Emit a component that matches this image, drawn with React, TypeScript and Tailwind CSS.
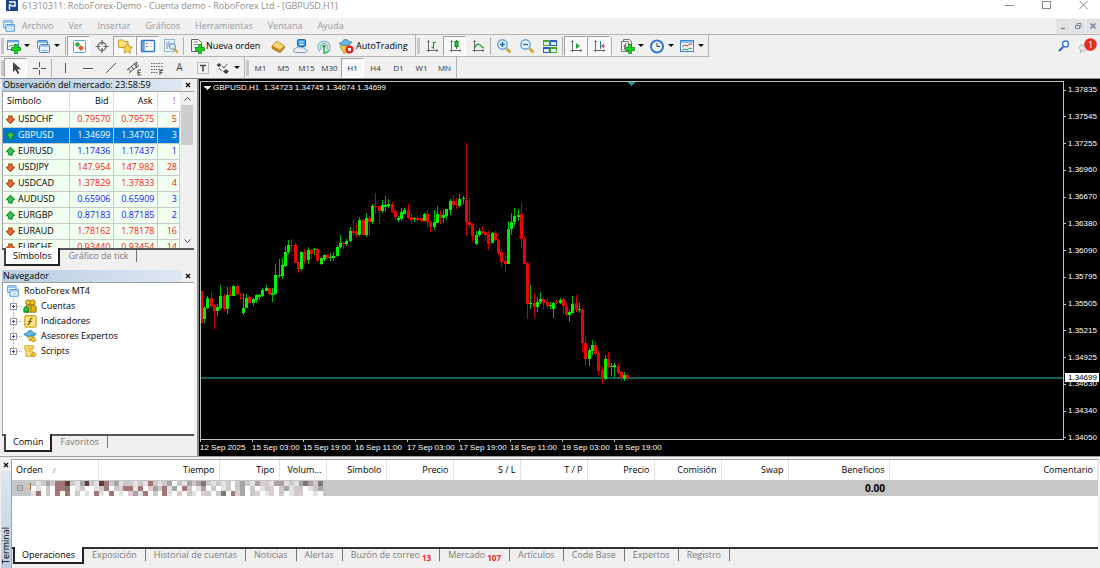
import React, { useState } from "react";

type Bar = [string, number, number, number, number];

// direction, high, low, body top, body bottom (three ticks per pixel)
const session1: Bar[] = [
  ["d", 333, 429, 333, 429], ["u", 378, 429, 384, 417], ["u", 348, 387, 354, 384], ["d", 336, 384, 354, 378],
  ["d", 372, 446, 375, 393], ["u", 372, 408, 381, 393], ["u", 315, 387, 348, 384], ["d", 342, 393, 348, 387],
  ["u", 321, 402, 345, 387], ["d", 321, 349, 343, 348], ["u", 315, 348, 318, 348], ["d", 315, 345, 318, 342],
  ["d", 340, 360, 342, 345], ["u", 339, 405, 384, 399], ["u", 342, 384, 354, 384], ["d", 348, 372, 351, 369],
  ["u", 354, 378, 357, 369], ["u", 342, 368, 345, 360], ["u", 342, 360, 345, 351], ["u", 324, 351, 330, 348],
  ["u", 315, 334, 324, 333], ["d", 323, 345, 324, 342], ["u", 324, 366, 340, 345], ["u", 252, 345, 285, 342],
  ["u", 237, 294, 285, 288], ["u", 234, 297, 255, 288], ["u", 198, 261, 216, 258], ["u", 180, 222, 195, 216],
  ["d", 178, 216, 195, 199], ["d", 189, 249, 195, 249], ["d", 246, 279, 246, 267], ["u", 213, 273, 216, 267],
  ["d", 207, 252, 216, 243], ["u", 201, 252, 210, 240], ["d", 207, 237, 210, 222], ["u", 204, 225, 207, 210],
  ["d", 204, 246, 207, 243], ["u", 231, 255, 234, 252], ["u", 225, 243, 225, 237], ["d", 222, 237, 225, 234],
  ["u", 219, 243, 231, 234], ["u", 216, 243, 228, 233], ["u", 195, 231, 201, 228], ["u", 165, 207, 189, 201],
  ["d", 186, 207, 189, 193], ["u", 177, 198, 183, 192], ["u", 141, 186, 153, 183], ["d", 117, 165, 153, 159],
  ["d", 129, 171, 156, 165], ["u", 111, 168, 120, 165], ["d", 117, 168, 120, 165], ["u", 98, 171, 114, 165],
  ["d", 108, 168, 114, 126], ["u", 72, 132, 78, 126], ["d", 39, 102, 77, 81],
];

const session2: Bar[] = [
  ["d", 228, 282, 228, 243], ["u", 210, 249, 225, 243], ["u", 198, 243, 225, 231], ["u", 207, 234, 221, 228],
  ["d", 216, 249, 222, 246], ["d", 237, 273, 243, 261], ["u", 258, 276, 264, 270], ["u", 234, 273, 246, 267],
  ["u", 234, 252, 240, 252], ["d", 222, 267, 240, 264], ["d", 252, 282, 261, 270], ["u", 261, 276, 265, 268],
  ["d", 258, 276, 264, 270], ["d", 263, 276, 264, 273], ["u", 249, 273, 252, 273], ["d", 240, 294, 252, 276],
  ["d", 273, 306, 276, 291], ["u", 240, 300, 276, 291], ["u", 228, 279, 252, 279], ["d", 240, 282, 252, 264],
  ["u", 240, 279, 255, 264], ["u", 237, 270, 237, 258], ["u", 207, 255, 213, 240], ["d", 195, 231, 213, 225],
  ["d", 204, 237, 222, 226], ["u", 192, 231, 207, 228], ["u", 198, 222, 203, 208], ["d", 39, 318, 210, 276],
  ["d", 204, 294, 276, 285], ["d", 279, 333, 282, 318], ["u", 303, 345, 315, 342], ["u", 294, 321, 303, 315],
  ["d", 288, 312, 303, 309], ["d", 303, 333, 306, 315], ["d", 303, 360, 312, 342], ["u", 306, 339, 309, 339],
  ["d", 303, 333, 309, 330], ["d", 327, 375, 330, 369], ["d", 357, 411, 366, 396], ["d", 372, 426, 393, 402],
  ["u", 273, 402, 297, 402], ["u", 249, 315, 276, 297], ["u", 234, 285, 258, 276], ["u", 237, 273, 255, 261],
  ["d", 216, 353, 252, 327], ["d", 321, 402, 327, 402],
];

const session3: Bar[] = [
  ["d", 216, 388, 219, 342], ["u", 285, 357, 339, 342], ["d", 309, 384, 339, 351], ["u", 321, 366, 336, 351],
  ["u", 306, 342, 327, 336], ["d", 321, 360, 327, 339], ["d", 324, 354, 336, 348], ["u", 336, 357, 345, 348],
  ["u", 336, 384, 339, 357], ["d", 330, 342, 336, 340], ["u", 324, 342, 330, 339], ["d", 324, 372, 327, 348],
  ["d", 339, 378, 348, 375], ["u", 360, 396, 366, 375], ["u", 318, 369, 342, 369], ["d", 315, 366, 339, 360],
  ["u", 336, 369, 357, 360], ["d", 354, 490, 360, 459], ["d", 438, 525, 459, 507], ["u", 474, 528, 480, 507],
  ["u", 450, 495, 465, 483], ["d", 453, 498, 465, 492], ["d", 483, 555, 489, 543], ["d", 528, 582, 540, 567],
  ["u", 495, 570, 507, 567], ["d", 486, 534, 507, 531], ["u", 519, 558, 528, 531], ["u", 519, 564, 525, 530],
  ["d", 519, 552, 528, 549], ["d", 543, 573, 546, 564], ["u", 546, 573, 555, 567], ["d", 549, 573, 555, 564],
];

const shift = (bars: Bar[], by: number) =>
  bars.map(([dir, ...levels]) => ({ up: dir === "u", levels: levels.map((v) => Math.round((v + by) / 3)) }));

const candles = [...shift(session1, 294), ...shift(session2, 144), ...shift(session3, 324)];

const prices = [
  "1.37835", "1.37545", "1.37255", "1.36960", "1.36670", "1.36380", "1.36090",
  "1.35795", "1.35505", "1.35215", "1.34925", "1.34630", "1.34340", "1.34050",
];

const times = [
  "12 Sep 2025", "15 Sep 03:00", "15 Sep 19:00", "16 Sep 11:00", "17 Sep 03:00",
  "17 Sep 19:00", "18 Sep 11:00", "19 Sep 03:00", "19 Sep 19:00",
];

const symbols = [
  { name: "USDCHF", bid: "0.79570", ask: "0.79575", spread: 5, up: false },
  { name: "GBPUSD", bid: "1.34699", ask: "1.34702", spread: 3, up: true },
  { name: "EURUSD", bid: "1.17436", ask: "1.17437", spread: 1, up: true },
  { name: "USDJPY", bid: "147.954", ask: "147.982", spread: 28, up: false },
  { name: "USDCAD", bid: "1.37829", ask: "1.37833", spread: 4, up: false },
  { name: "AUDUSD", bid: "0.65906", ask: "0.65909", spread: 3, up: true },
  { name: "EURGBP", bid: "0.87183", ask: "0.87185", spread: 2, up: true },
  { name: "EURAUD", bid: "1.78162", ask: "1.78178", spread: 16, up: false },
  { name: "EURCHF", bid: "0.93440", ask: "0.93454", spread: 14, up: false },
];

const menus = ["Archivo", "Ver", "Insertar", "Gráficos", "Herramientas", "Ventana", "Ayuda"];
const periods = ["M1", "M5", "M15", "M30", "H1", "H4", "D1", "W1", "MN"];

const columns = [
  { label: "Orden", width: "w-[86px]" },
  { label: "Tiempo", width: "w-[121px]" },
  { label: "Tipo", width: "w-[60px]" },
  { label: "Volum...", width: "w-[47px]" },
  { label: "Símbolo", width: "w-[60px]" },
  { label: "Precio", width: "w-[67px]" },
  { label: "S / L", width: "w-[67px]" },
  { label: "T / P", width: "w-[67px]" },
  { label: "Precio", width: "w-[67px]" },
  { label: "Comisión", width: "w-[67px]" },
  { label: "Swap", width: "w-[67px]" },
  { label: "Beneficios", width: "w-[101px]" },
  { label: "Comentario", width: "w-auto" },
];

const terminalTabs: { label: string; count?: number }[] = [
  { label: "Operaciones" },
  { label: "Exposición" },
  { label: "Historial de cuentas" },
  { label: "Noticias" },
  { label: "Alertas" },
  { label: "Buzón de correo", count: 13 },
  { label: "Mercado", count: 107 },
  { label: "Artículos" },
  { label: "Code Base" },
  { label: "Expertos" },
  { label: "Registro" },
];

// hidden order details, one letter per tile
const mosaic = [
  "glgmgrrkglmkglkrgmlgglglrglgmwglmgmdglglgwgmglmpglmmlglmdmgd",
  "wlwgwrrdwlgwwlgrwgprrlrwpmgrlmwrgwlmwgwlgwgmwgwlgpwgmlggwlgm",
  "lrwgwrwrwgwlwrlwrwlwpmlrwgwrlwpwglwpgwgdwrpmwgpwlpwgwlgpwwlw",
];
const tileColors: Record<string, string> = {
  w: "#ffffff", l: "#e3e1e1", g: "#cbc9c9", m: "#a8a4a4", d: "#7c7676", r: "#a17676", k: "#5f3a3a", p: "#e0cccc",
};

const Caret = () => (
  <svg className="h-[3px] w-[6px] shrink-0" viewBox="0 0 6 3">
    <path d="M0 0h6L3 3z" fill="#111" />
  </svg>
);

const Svg: React.FC<{ children: React.ReactNode; size?: string }> = ({ children, size = "h-4 w-4" }) => (
  <svg className={`${size} shrink-0`} viewBox="0 0 16 16" fill="none">
    {children}
  </svg>
);

const Plus = () => (
  <path d="M9.500 6.500h3v3h3v3h-3v3h-3v-3h-3v-3h3z" fill="#1fd321" stroke="#0a8a12" strokeWidth=".8" />
);

const Axes = () => (
  <path d="M4.500 3v11M2.500 12.500h11M3.500 4l1-1.500 1 1.500M12.500 11.500l1.500 1-1.500 1" stroke="#666" />
);

const Diamond = () => <path d="M12 9l3 3-3 3-3-3z" fill="#f2c330" stroke="#9c7411" strokeWidth=".8" />;

const icons: Record<string, React.ReactNode> = {
  newChart: (
    <>
      <rect x="2.500" y="2.500" width="11" height="9" fill="#fff" stroke="#3f83c8" />
      <path d="M2 3.500h12" stroke="#79b0e2" strokeWidth="2" />
      <path d="M4 9l2-2 2 1 3-2" stroke="#3a9c4a" />
      <Plus />
    </>
  ),
  profiles: (
    <>
      <rect x="2.500" y="2.500" width="10" height="8" rx="1" fill="#fff" stroke="#3f83c8" />
      <path d="M3 4h9" stroke="#79b0e2" strokeWidth="2" />
      <rect x="4.500" y="6.500" width="10" height="8" rx="1" fill="#e4f0fb" stroke="#3f83c8" />
      <path d="M5 8h9" stroke="#9cc6ea" strokeWidth="2" />
      <path d="M6.500 12.500h6" stroke="#79b0e2" />
    </>
  ),
  market: (
    <>
      <rect x="2.500" y="2.500" width="12" height="12" rx="1" fill="#fff" stroke="#5aa0da" />
      <path d="M6.500 4l2.500 2.500L6.500 9 4 6.500z" fill="#2fb940" stroke="#12852a" strokeWidth=".6" />
      <path d="M10 7.500l2.500 2.500-2.500 2.500L7.500 10z" fill="#f05a28" stroke="#b43310" strokeWidth=".6" />
    </>
  ),
  crosshair: (
    <>
      <circle cx="8" cy="8.500" r="4" stroke="#666" strokeWidth="1.300" />
      <path d="M8 2v5M8 10v5M1.500 8.500h5M9.500 8.500h5" stroke="#666" strokeWidth="1.200" />
    </>
  ),
  favorites: (
    <>
      <path d="M1 4l1-2h4l1 1.500h4v6H2z" fill="#ffe27a" stroke="#c9961b" />
      <path d="M10.500 5.500l1.500 3.300 3.500.4-2.600 2.400.7 3.500-3.100-1.800-3.100 1.800.7-3.500-2.600-2.400 3.500-.4z" fill="#ffd94d" stroke="#b98512" strokeWidth=".8" />
    </>
  ),
  navigator: (
    <>
      <rect x="1.500" y="2.500" width="13" height="11" rx="1" fill="#fff" stroke="#2f78c4" strokeWidth="1.400" />
      <path d="M3.500 3v10" stroke="#5a9bdc" strokeWidth="2.500" />
      <path d="M6 5.500h1.500M6 8.500h1.500" stroke="#b8342c" />
      <path d="M8.500 5.500h4M8.500 8.500h4" stroke="#cfdbe8" />
    </>
  ),
  tester: (
    <>
      <rect x="1.500" y="1.500" width="10" height="12" fill="#eef6fd" stroke="#9ab6cf" />
      <path d="M4 4v7M6 3v6M8 5v6" stroke="#6d8faf" />
      <circle cx="9.500" cy="8.500" r="3" fill="#d6ecfb" stroke="#4e86b8" />
      <path d="M11.500 11l3 3.500" stroke="#caa02c" strokeWidth="2" />
    </>
  ),
  order: (
    <>
      <path d="M2.500 1.500h7l3 3v9h-10z" fill="#fff" stroke="#666" />
      <path d="M4.500 4h5M4.500 6.500h5M4.500 9h3" stroke="#888" />
      <Plus />
    </>
  ),
  editor: (
    <>
      <path d="M7 3l7.500 5-4.500 4.500L2 8z" fill="#f7d470" stroke="#b67d17" strokeWidth=".8" />
      <path d="M2 8v2.500l8 4.500 4.500-5V8L10 12.500z" fill="#c98a1d" stroke="#a86f12" strokeWidth=".6" />
    </>
  ),
  vps: (
    <>
      <rect x="4.500" y="1.500" width="8" height="7" rx="1" fill="#3a9cf0" stroke="#1767b3" />
      <path d="M6.500 4h4M6.500 6.500h4" stroke="#fff" />
      <path d="M2.500 14.500a2 2 0 010-4c1-2 4-2 5-.5 2-1 4 0 4.500 1 3 0 3 3.500.5 3.500z" fill="#e9eef5" stroke="#8a99ad" />
    </>
  ),
  signals: (
    <>
      <path d="M4 13.500a6 6 0 118.500-.5M5.500 11.500a3.500 3.500 0 115 0" stroke="#7fb4c6" strokeWidth="1.200" />
      <circle cx="8" cy="8.500" r="1.800" fill="#2fa84a" />
      <path d="M8 9v6c2 0 4-1 5-3" stroke="#4dbb62" strokeWidth="1.800" />
    </>
  ),
  auto: (
    <>
      <path d="M2 8l9-1 2 5-7 3.500z" fill="#f5cb45" stroke="#b08314" strokeWidth=".8" />
      <path d="M1 5.500c2 2.500 11 2.500 13-1C13 3 11 4 10.500 3 9.500 1 5 1 4.500 3.500 4 4.500 2 4.500 1 5.500z" fill="#6bb8e8" stroke="#2d7cb2" strokeWidth=".8" />
      <circle cx="11.500" cy="11.500" r="4" fill="#e3261c" />
      <rect x="10" y="10" width="3" height="3" fill="#fff" />
    </>
  ),
  bars: (
    <>
      <Axes />
      <path d="M9.500 4v7M9.500 4.500H12M7.500 9.500h2" stroke="#1b9c2f" strokeWidth="1.200" />
    </>
  ),
  candles: (
    <>
      <Axes />
      <path d="M9.500 2v9" stroke="#0a7d1c" />
      <rect x="8" y="3.500" width="3" height="5" fill="#2fc644" stroke="#0a7d1c" />
    </>
  ),
  line: (
    <>
      <Axes />
      <path d="M4.500 10c2-4 4-4.500 5-3.500S12 9.500 14 10" stroke="#1b9c2f" strokeWidth="1.200" />
    </>
  ),
  zoomIn: (
    <>
      <path d="M10.500 10.500l4 4" stroke="#d3a52b" strokeWidth="3" />
      <circle cx="6.500" cy="6.500" r="4.700" fill="#e6f4fd" stroke="#5aa3da" strokeWidth="1.400" />
      <path d="M6.500 4v5M4 6.500h5" stroke="#1f6cae" strokeWidth="1.400" />
    </>
  ),
  zoomOut: (
    <>
      <path d="M10.500 10.500l4 4" stroke="#d3a52b" strokeWidth="3" />
      <circle cx="6.500" cy="6.500" r="4.700" fill="#e6f4fd" stroke="#5aa3da" strokeWidth="1.400" />
      <path d="M4 6.500h5" stroke="#1f6cae" strokeWidth="1.400" />
    </>
  ),
  tile: (
    <>
      <rect x="1" y="2" width="7" height="6" fill="#4ba62b" />
      <rect x="8" y="2" width="7" height="6" fill="#2a5fc0" />
      <rect x="1" y="9" width="7" height="6" fill="#2a5fc0" />
      <rect x="8" y="9" width="7" height="6" fill="#4ba62b" />
      <path d="M2 4h5v3H2zM9 4h5v3H9zM2 11h5v3H2zM9 11h5v3H9z" fill="#dfeaf0" />
    </>
  ),
  scroll: (
    <>
      <Axes />
      <path d="M8 5l4 3-4 3z" fill="#23a638" />
    </>
  ),
  shiftEnd: (
    <>
      <Axes />
      <path d="M9.500 3v8" stroke="#2e6f9e" />
      <path d="M14 8h-3M13 6l-2.500 2 2.500 2" stroke="#c33c1d" />
    </>
  ),
  indicators: (
    <>
      <path d="M4.500 1.500h6l2 2v8h-8z" fill="#eee" stroke="#777" />
      <path d="M2.500 3.500h7v10h-7z" fill="#fff" stroke="#777" />
      <path d="M7.500 5.500c-2-.5-1.500 2-1.500 3.500S5.500 12 4.500 11.500M4.500 8h3" stroke="#444" />
      <Plus />
    </>
  ),
  clock: (
    <>
      <circle cx="8" cy="8.500" r="6" fill="#eef6ff" stroke="#2f78d0" strokeWidth="2" />
      <path d="M8 5v3.500h3" stroke="#333" />
    </>
  ),
  template: (
    <>
      <rect x="1.500" y="2.500" width="13" height="11" fill="#f4f9fe" stroke="#3f83c8" />
      <path d="M2 4h12" stroke="#8cbde8" strokeWidth="2" />
      <path d="M3 8.500l3-1.500 2 1 3-2h2" stroke="#b6402b" />
      <path d="M3 12l3-1 2 1 3-2 2 1" stroke="#2a9440" />
    </>
  ),
  cursor: <path d="M5 2v10l2.500-2.200L9.500 14l1.800-.8L9.500 9.200H13z" fill="#444" />,
  cross: <path d="M8.500 2v5M8.500 10v5M2 8.500h5M10 8.500h5" stroke="#555" />,
  vline: <path d="M8.500 3v10" stroke="#555" />,
  hline: <path d="M3 8.500h10" stroke="#555" />,
  trend: <path d="M3 13L13 3" stroke="#555" />,
  channel: (
    <>
      <path d="M1 10L11 2M3 13L13 5M2 8l3 4M5 6l3 4M8 3l3 5M11 2l-1 4" stroke="#555" />
      <path d="M15 10h-3v5h3M12 12.500h2.500" stroke="#444" />
    </>
  ),
  fibo: (
    <>
      <path d="M2 3.500h12M2 6.500h12M2 9.500h12M2 12.500h7" stroke="#666" strokeDasharray="1.500 1" />
      <path d="M14 10.500h-3V15M11 12.500h2.500" stroke="#444" />
    </>
  ),
  label: (
    <>
      <rect x="2.500" y="2.500" width="11" height="11" stroke="#888" strokeDasharray="1 1" />
      <path d="M5 5.500h6M8 5.500v6" stroke="#444" strokeWidth="1.500" />
    </>
  ),
  arrows: (
    <>
      <path d="M4 3l2.500 2L4 7 1.500 5zM11 9l3 2.500-3 2.500-3-2.500z" fill="#444" />
      <path d="M4 8l2.500 3M7 6l2 2 3-4" stroke="#555" />
    </>
  ),
};

const Tool: React.FC<{ icon: string; label: string; pressed?: boolean }> = ({ icon, label, pressed }) => (
  <button
    aria-label={label}
    className={
      pressed
        ? "flex h-5 w-[23px] items-center justify-center border border-t-[#a0a0a0] border-l-[#a0a0a0] border-r-white border-b-white bg-[#f8f8f8]"
        : "flex h-5 w-[23px] items-center justify-center"
    }
  >
    <Svg>{icons[icon]}</Svg>
  </button>
);

const DropTool: React.FC<{ icon: string; label: string }> = ({ icon, label }) => (
  <button aria-label={label} className="flex h-5 w-[30px] items-center gap-[3px] pl-px">
    <Svg>{icons[icon]}</Svg>
    <Caret />
  </button>
);

const Separator = () => <div className="mx-px h-[18px] w-px bg-[#b0b0b0]" />;
const Handle = () => <div className="ml-px h-4 w-[3px] bg-[#c8c8c8]" />;

const CloseMark = () => (
  <svg className="h-[6px] w-[6px]" viewBox="0 0 6 6">
    <path d="M1 1l4 4M5 1L1 5" stroke="#111" strokeWidth="1.400" />
  </svg>
);

const PanelTitle: React.FC<{ text: string }> = ({ text }) => (
  <div className="flex h-3 items-center justify-between">
    <h2 className="flex-1 bg-linear-to-r from-[#b9cce0] to-[#dfe8f1] pl-px leading-3">{text}</h2>
    <button aria-label="Cerrar" className="flex h-3 w-3 items-center justify-center">
      <CloseMark />
    </button>
  </div>
);

const PanelTabs: React.FC<{ tabs: string[] }> = ({ tabs }) => {
  const [active, setActive] = useState(0);

  return (
    <div className="flex h-[18px] border-t-2 border-[#555] bg-[#f0f0f0] pl-[2px] leading-3">
      {tabs.map((tab, i) => (
        <button
          key={tab}
          onClick={() => setActive(i)}
          className={
            i === active
              ? "-mt-[2px] h-[18px] border-x-2 border-b-2 border-[#222] border-l-[#444] bg-white px-[7px] text-black"
              : "h-3 border-r border-[#777] px-2 text-[#7a7a7a]"
          }
        >
          {tab}
        </button>
      ))}
    </div>
  );
};

const Arrow: React.FC<{ up: boolean }> = ({ up }) => (
  <svg className="h-[9px] w-[9px] shrink-0" viewBox="0 0 8 8">
    {up ? (
      <path d="M4 .5L7.500 4 5.500 5v2h-3V5L.5 4z" fill="#3fc552" stroke="#14832a" strokeWidth=".9" />
    ) : (
      <path d="M4 7.500L.5 4l2-1V1h3v2l2 1z" fill="#f0703c" stroke="#b03a14" strokeWidth=".9" />
    )}
  </svg>
);

const MarketWatch = () => {
  const [selected, setSelected] = useState("GBPUSD");

  return (
    <section className="flex flex-col">
      <PanelTitle text="Observación del mercado: 23:58:59" />
      <div className="flex h-[157px] overflow-hidden border-t border-l border-[#a0a0a0] bg-white">
        <div className="min-w-0 flex-1">
          <table className="w-full table-fixed border-collapse leading-3">
            <thead>
              <tr className="h-[19px]">
                <th className="w-[66px] border-r border-[#dcdcdc] pl-1 text-left font-normal">Símbolo</th>
                <th className="w-11 border-r border-[#dcdcdc] pr-1 text-right font-normal">Bid</th>
                <th className="w-11 border-r border-[#dcdcdc] pr-1 text-right font-normal">Ask</th>
                <th className="pr-1 text-right font-normal text-[#b06060]">!</th>
              </tr>
            </thead>
            <tbody>
              {symbols.map((s) => {
                const isSelected = s.name === selected;
                const tone = isSelected ? "text-white" : s.up ? "text-[#1414ff]" : "text-[#ff1414]";
                const cell = `border border-[#c6cdc6] pr-[2px] text-right ${tone}`;

                return (
                  <tr
                    key={s.name}
                    onClick={() => setSelected(s.name)}
                    className={isSelected ? "h-4 bg-[#0078d7] text-white" : "h-4 bg-[#f0fff0]"}
                  >
                    <td className="border-y border-r border-[#c6cdc6] pl-[3px]">
                      <span className="flex items-center gap-[3px]">
                        <Arrow up={s.up} />
                        {s.name}
                      </span>
                    </td>
                    <td className={cell}>{s.bid}</td>
                    <td className={cell}>{s.ask}</td>
                    <td className={cell}>{s.spread}</td>
                  </tr>
                );
              })}
            </tbody>
          </table>
        </div>
        <div className="flex w-[14px] flex-col items-center justify-between bg-[#f0f0f0] py-[5px]">
          <svg className="h-1 w-[7px]" viewBox="0 0 7 4">
            <path d="M.5 3.500l3-3 3 3" fill="none" stroke="#444" />
          </svg>
          <div className="mt-1 mb-auto h-10 w-3 bg-[#cdcdcd]" />
          <svg className="h-1 w-[7px]" viewBox="0 0 7 4">
            <path d="M.5.5l3 3 3-3" fill="none" stroke="#444" />
          </svg>
        </div>
      </div>
      <PanelTabs tabs={["Símbolos", "Gráfico de tick"]} />
    </section>
  );
};

const PlatformIcon = () => (
  <Svg size="h-3 w-3">
    <rect x="1" y="1" width="11" height="9" rx="1" fill="#fff" stroke="#4a98dc" strokeWidth="1.500" />
    <path d="M1 3h11" stroke="#8cc0ec" strokeWidth="2" />
    <rect x="4" y="6" width="11" height="9" rx="1" fill="#fff" stroke="#4a98dc" strokeWidth="1.500" />
    <path d="M4 8h11" stroke="#8cc0ec" strokeWidth="2" />
    <path d="M6 13l2-2 1.500 2 1.500-2 2 2" stroke="#6fb0e6" />
  </Svg>
);

const treeItems = [
  {
    label: "Cuentas",
    icon: (
      <>
        <circle cx="6" cy="4" r="3" fill="#f0c52c" stroke="#8a6a0c" />
        <circle cx="11" cy="4" r="3" fill="#f0c52c" stroke="#8a6a0c" />
        <path d="M3 15V9c0-2 5-3 6-1 1-2 6-1 6 1v6z" fill="#e0b01c" stroke="#8a6a0c" />
        <path d="M9 8v6" stroke="#8a6a0c" />
        <path d="M1 10l2-1.500L6 10v5H1z" fill="#27c43a" stroke="#0d8520" />
      </>
    ),
  },
  {
    label: "Indicadores",
    icon: (
      <>
        <rect x="2" y="2" width="13" height="13" rx="2" fill="#ffe684" stroke="#d1a52c" strokeWidth="1.500" />
        <path d="M11 5c-3-1-2.500 2-3 4s-1 3.500-3 3M6 8.500h4" stroke="#5b4a14" strokeWidth="1.200" />
      </>
    ),
  },
  {
    label: "Asesores Expertos",
    icon: (
      <>
        <path d="M4 7l8 0 1 4-5 3z" fill="#f5cb45" stroke="#b08314" strokeWidth=".8" />
        <path d="M1 6c2 3 12 3 14-.5-1-1-3-.5-4-2C10 1 6 1 5 4c-1 1-3 1-4 2z" fill="#5cb3ea" stroke="#2d7cb2" />
        <Diamond />
      </>
    ),
  },
  {
    label: "Scripts",
    icon: (
      <>
        <path d="M2 2h10v3h-2l1 7 2 2H3l1-2-1-6H2z" fill="#ffe27a" stroke="#c9961b" />
        <path d="M5 5h4M5 8h4" stroke="#c9961b" />
        <Diamond />
      </>
    ),
  },
];

const Navigator = () => (
  <section className="flex min-h-0 flex-1 flex-col">
    <PanelTitle text="Navegador" />
    <div className="flex-1 border-t border-l border-[#a0a0a0] bg-white pl-1 leading-[15px]">
      <div className="flex h-[15px] items-center gap-[5px]">
        <PlatformIcon />
        RoboForex MT4
      </div>
      <ul>
        {treeItems.map((item, i) => (
          <li key={item.label} className="flex h-[15px] items-center">
            <svg className="h-[15px] w-4" viewBox="0 0 16 15" fill="none">
              <path
                d={i === treeItems.length - 1 ? "M6.500 0v8M10 8.500h6" : "M6.500 0v15M10 8.500h6"}
                stroke="#aaa"
                strokeDasharray="1 1"
              />
              <rect x="3.500" y="5.500" width="6" height="6" fill="#fff" stroke="#999" />
              <path d="M5 8.500h3M6.500 7v3" stroke="#2a4a9a" />
            </svg>
            <Svg size="h-[14px] w-[14px]">{item.icon}</Svg>
            <span className="ml-1">{item.label}</span>
          </li>
        ))}
      </ul>
    </div>
    <PanelTabs tabs={["Común", "Favoritos"]} />
  </section>
);

const Chart = () => (
  <section className="flex min-w-0 flex-1 flex-col border-l-2 border-[#8c8c8c] bg-black pt-[2px] pl-px font-['Liberation_Sans',Arial,sans-serif] text-[8px] leading-3 text-white">
    <div className="flex min-h-0 flex-1">
      <div className="relative min-w-0 flex-1 border border-[#c0c0c0]">
        <svg className="block h-full w-full" shapeRendering="crispEdges">
          <rect x="0" y="295" width="100%" height="2" fill="#0f5f5b" />
          {candles.map(({ up, levels: [high, low, top, bottom] }, i) => {
            const x = Math.round(i * 3.23);

            return (
              <g key={i}>
                <rect x={x} y={high} width="1" height={low - high} fill={up ? "#00b800" : "#c80000"} />
                <rect
                  x={x - 1}
                  y={top}
                  width="3"
                  height={Math.max(1, bottom - top)}
                  fill={up ? "#00f000" : "#f00000"}
                />
              </g>
            );
          })}
          <path d="M426 0h8l-4 4z" fill="#1f9a94" />
          <path d="M3 4h7l-3.500 4z" fill="#fff" />
        </svg>
        <p className="absolute top-0 left-3 whitespace-pre">GBPUSD,H1  1.34723 1.34745 1.34674 1.34699</p>
      </div>
      <div className="relative flex w-9 flex-col">
        <ul className="-mb-1 flex flex-1 flex-col justify-between pt-[3px]">
          {prices.map((p) => (
            <li key={p} className="flex h-3 items-center gap-[2px]">
              <span className="h-px w-[2px] bg-[#c0c0c0]" />
              {p}
            </li>
          ))}
        </ul>
        <span className="absolute top-[292px] left-px flex h-[9px] w-[34px] items-center bg-white pl-[3px] text-black">
          1.34699
        </span>
      </div>
    </div>
    <svg className="h-4 w-full" fill="#fff">
      {times.map((t, i) => (
        <g key={t}>
          <rect x={Math.round(i * 51.7)} y="0" width="1" height="2" fill="#c0c0c0" />
          <text x={Math.round(i * 51.7)} y="10">
            {t}
          </text>
        </g>
      ))}
    </svg>
  </section>
);

const Terminal = () => {
  const [tab, setTab] = useState("Operaciones");

  return (
    <section className="flex h-[112px] border-t border-[#a0a0a0] bg-[#f0f0f0] pt-[2px] leading-3">
      <div className="flex w-[11px] flex-col items-center">
        <button aria-label="Cerrar" className="flex h-3 w-[9px] items-center justify-center">
          <CloseMark />
        </button>
        <h2 className="w-[10px] flex-1 rotate-180 bg-linear-to-b from-[#b9cce0] to-[#dfe8f1] pt-1 leading-[10px] [writing-mode:vertical-rl]">
          Terminal
        </h2>
      </div>
      <div className="mr-[2px] flex min-w-0 flex-1 flex-col border-t border-l border-[#a0a0a0] bg-white">
        <table className="w-full table-fixed border-collapse">
          <thead>
            <tr className="h-[20px]">
              {columns.map((c, i) => (
                <th
                  key={i}
                  className={`${c.width} border-r border-[#e2e2e2] px-1 font-normal ${i === 0 ? "text-left" : "text-right"}`}
                >
                  {c.label}
                  {i === 0 && <span className="ml-[10px] text-[8px] text-[#777]">/</span>}
                </th>
              ))}
            </tr>
          </thead>
          <tbody>
            <tr className="h-4 bg-[#c6c6c6]">
              <td colSpan={11}>
                <div className="flex items-center gap-[5px] pl-1">
                  <svg className="h-2 w-2" viewBox="0 0 8 8" fill="none">
                    <circle cx="4" cy="4" r="3" stroke="#888" />
                    <path d="M3 4h2" stroke="#888" />
                  </svg>
                  <svg className="h-[15px] w-[294px]" viewBox="0 0 294 15" shapeRendering="crispEdges">
                    <rect x="1" y="2" width="1" height="7" fill="#a0622c" />
                    {mosaic.map((row, y) =>
                      row.split("").map((c, x) => (
                        <rect key={`${x}-${y}`} x={2 + x * 4.866} y={y * 5} width="5" height="5" fill={tileColors[c]} />
                      ))
                    )}
                  </svg>
                </div>
              </td>
              <td className="pr-1 text-right text-[10px] font-bold">0.00</td>
              <td />
            </tr>
          </tbody>
        </table>
        <div className="mt-auto flex h-[21px] border-t-2 border-[#333] bg-[#f0f0f0]">
          {terminalTabs.map((t) => (
            <button
              key={t.label}
              onClick={() => setTab(t.label)}
              className={
                t.label === tab
                  ? "-mt-[2px] ml-px h-[17px] border-x-2 border-b-2 border-[#222] bg-white px-[7px]"
                  : "flex h-3 items-start border-r border-[#777] px-2 text-[#7a7a7a]"
              }
            >
              {t.label}
              {t.count && <span className="ml-[2px] pt-[3px] text-[8px] leading-3 font-bold text-[#ff2020]">{t.count}</span>}
            </button>
          ))}
        </div>
      </div>
    </section>
  );
};

export default function App() {
  const [period, setPeriod] = useState("H1");

  return (
    <div className="flex h-screen flex-col overflow-hidden bg-[#f0f0f0] font-['Open_Sans','Noto_Sans',sans-serif] text-[9px] text-black">
      <header className="flex h-[18px] items-start justify-between bg-white">
        <div className="flex items-start gap-1 pl-[6px]">
          <svg className="h-[11px] w-3" viewBox="0 1 12 11" fill="none">
            <rect width="12" height="12" fill="#17448a" />
            <path d="M3 3h6v4H5.500M3.500 10.500V6h2" stroke="#fff" strokeWidth="1.500" />
          </svg>
          <h1 className="leading-[11px] text-[#8c8c8c]">61310311: RoboForex-Demo - Cuenta demo - RoboForex Ltd - [GBPUSD,H1]</h1>
        </div>
        <div className="flex gap-7 pr-3">
          <button aria-label="Minimizar">
            <svg className="h-[10px] w-[9px]" viewBox="0 0 9 10"><path d="M0 5.500h9" stroke="#888" /></svg>
          </button>
          <button aria-label="Maximizar">
            <svg className="h-[10px] w-[9px]" viewBox="0 0 9 10"><rect x=".5" y="1.500" width="8" height="7" fill="none" stroke="#888" /></svg>
          </button>
          <button aria-label="Cerrar ventana">
            <svg className="h-[10px] w-[9px]" viewBox="0 0 9 10"><path d="M.5 1l8 8M8.500 1l-8 8" stroke="#888" /></svg>
          </button>
        </div>
      </header>

      <nav className="flex h-[17px] items-center justify-between border-b border-[#b4b4b4] text-[#9a9a9a]">
        <div className="flex items-center gap-[15px] pl-[3px]">
          <PlatformIcon />
          {menus.map((m, i) => (
            <button key={m} className={i === 0 ? "-ml-2 leading-3" : "leading-3"}>
              {m}
            </button>
          ))}
        </div>
        <div className="flex gap-px">
          <button aria-label="Minimizar gráfico" className="flex h-[14px] w-[14px] items-center justify-center bg-[#e2e2e2]">
            <svg className="h-2 w-2" viewBox="0 0 8 8"><path d="M2 6.500h4" stroke="#7388a0" strokeWidth="1.500" /></svg>
          </button>
          <button aria-label="Restaurar gráfico" className="flex h-[14px] w-[14px] items-center justify-center bg-[#e2e2e2]">
            <svg className="h-2 w-2" viewBox="0 0 8 8" fill="none"><path d="M3 3V1.500h4V5H5.500M1.500 3.500h4v3h-4z" stroke="#7388a0" /></svg>
          </button>
          <button aria-label="Cerrar gráfico" className="flex h-[14px] w-[14px] items-center justify-center bg-[#e2e2e2]">
            <svg className="h-2 w-2" viewBox="0 0 8 8"><path d="M1.500 1.500l5 5M6.500 1.500l-5 5" stroke="#7388a0" strokeWidth="1.600" /></svg>
          </button>
        </div>
      </nav>

      <div className="flex h-[22px] justify-between">
        <div className="flex h-[22px] items-center border-r border-b border-[#b4b4b4]">
          <Handle />
          <DropTool icon="newChart" label="Nuevo gráfico" />
          <DropTool icon="profiles" label="Perfiles" />
          <Separator />
          <Tool icon="market" label="Observación del mercado" pressed />
          <Tool icon="crosshair" label="Ventana de datos" />
          <Tool icon="favorites" label="Navegador" pressed />
          <Tool icon="navigator" label="Terminal" pressed />
          <Tool icon="tester" label="Probador de estrategias" />
          <Separator />
          <button className="flex w-[81px] items-center gap-px pl-1 whitespace-nowrap">
            <Svg>{icons.order}</Svg>
            Nueva orden
          </button>
          <Tool icon="editor" label="MetaEditor" />
          <Tool icon="vps" label="Servidor virtual" />
          <Tool icon="signals" label="Señales" />
          <button className="flex w-[80px] items-center gap-[2px] pl-[3px] whitespace-nowrap">
            <Svg>{icons.auto}</Svg>
            AutoTrading
          </button>
          <div className="h-full w-px bg-[#b4b4b4]" />
          <Handle />
          <Tool icon="bars" label="Gráfico de barras" />
          <Tool icon="candles" label="Velas japonesas" pressed />
          <Tool icon="line" label="Gráfico de líneas" />
          <Separator />
          <Tool icon="zoomIn" label="Aumentar" />
          <Tool icon="zoomOut" label="Disminuir" />
          <Tool icon="tile" label="Mosaico" />
          <Separator />
          <Tool icon="scroll" label="Desplazamiento automático" pressed />
          <Tool icon="shiftEnd" label="Desplazar fin del gráfico" pressed />
          <Separator />
          <div className="flex pl-[5px]">
            <DropTool icon="indicators" label="Indicadores" />
            <DropTool icon="clock" label="Períodos" />
            <DropTool icon="template" label="Plantillas" />
          </div>
        </div>
        <div className="flex items-center gap-2 pr-[3px]">
          <button aria-label="Buscar">
            <svg className="h-3 w-3" viewBox="0 0 12 12" fill="none">
              <path d="M5 7l-4 4" stroke="#2a62c8" strokeWidth="2" />
              <circle cx="7.500" cy="4" r="3" fill="#fff" stroke="#3a74dc" strokeWidth="1.400" />
            </svg>
          </button>
          <button aria-label="Mensajes" className="flex">
            <svg className="h-4 w-[19px]" viewBox="0 0 19 16">
              <path d="M2 15l1-3c-3-1-2-5 2-5s6 4 3 5c-1 1-3 1-4 1z" fill="#e6e6ea" stroke="#b2b2ba" />
              <circle cx="12.500" cy="6.500" r="6.300" fill="#df301b" />
              <text x="10" y="10" fill="#fff" fontSize="9">1</text>
            </svg>
          </button>
        </div>
      </div>

      <div className="flex h-[21px]">
        <div className="flex items-center border-r border-[#b4b4b4]">
          <Handle />
          <Tool icon="cursor" label="Cursor" pressed />
          <Tool icon="cross" label="Retículo" />
          <Separator />
          <Tool icon="vline" label="Línea vertical" />
          <Tool icon="hline" label="Línea horizontal" />
          <Tool icon="trend" label="Línea de tendencia" />
          <Tool icon="channel" label="Canal equidistante" />
          <Tool icon="fibo" label="Retroceso de Fibonacci" />
          <button className="h-5 w-[23px] text-center text-[10px] font-medium text-[#444]">A</button>
          <Tool icon="label" label="Etiqueta de texto" />
          <DropTool icon="arrows" label="Flechas" />
          <div className="h-full w-px bg-[#b4b4b4]" />
          <Handle />
          {periods.map((p) => (
            <button
              key={p}
              onClick={() => setPeriod(p)}
              className={
                p === period
                  ? "h-5 w-[23px] border border-t-[#a0a0a0] border-l-[#a0a0a0] border-r-white border-b-white bg-[#f8f8f8] text-[8px] text-[#333]"
                  : "h-5 w-[23px] text-[8px] text-[#333]"
              }
            >
              {p}
            </button>
          ))}
        </div>
      </div>

      <main className="flex min-h-0 flex-1 border-t border-[#8c8c8c]">
        <aside className="flex w-[197px] shrink-0 flex-col gap-1 pr-[3px] pb-1 pl-[2px]">
          <MarketWatch />
          <Navigator />
        </aside>
        <Chart />
      </main>
      <Terminal />
    </div>
  );
}
